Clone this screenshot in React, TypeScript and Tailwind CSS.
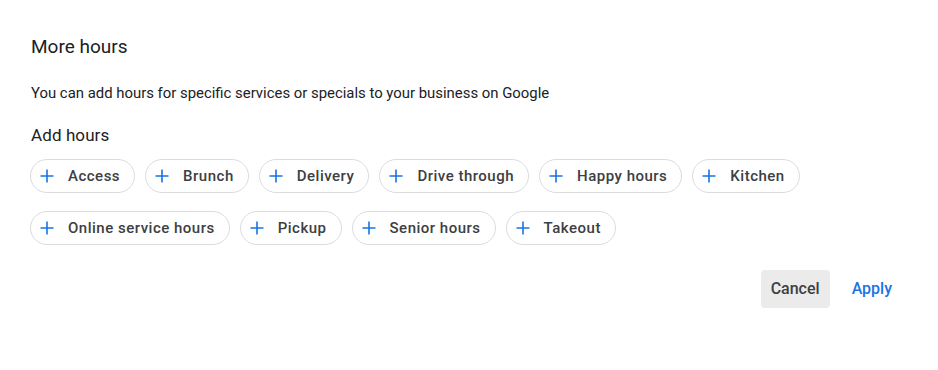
const chipRows = [
  ["Access", "Brunch", "Delivery", "Drive through", "Happy hours", "Kitchen"],
  ["Online service hours", "Pickup", "Senior hours", "Takeout"],
];

function PlusIcon() {
  return (
    <svg width="18" height="18" viewBox="0 0 18 18" aria-hidden="true">
      <path d="M9 2.5v13M2.5 9h13" stroke="#1a73e8" strokeWidth="1.6" fill="none" />
    </svg>
  );
}

function HoursChip({ label }: { label: string }) {
  return (
    <button className="flex h-[34px] items-center gap-3 rounded-full border border-[#dadce0] bg-white pl-[7px] pr-[14px] text-[15px] font-medium tracking-[0.5px] text-[#3c4043]">
      <PlusIcon />
      {label}
    </button>
  );
}

export default function App() {
  return (
    <div
      className="h-[370px] w-[938px] bg-white px-[30px] pt-[35px]"
      style={{ fontFamily: "Roboto, 'Liberation Sans', sans-serif" }}
    >
      <h2 className="pl-px text-[19px] leading-6 text-[#202124]">More hours</h2>

      <p className="mt-6 pl-px text-[14.9px] leading-5 text-[#202124]">
        You can add hours for specific services or specials to your business on Google
      </p>

      <p className="mt-[20px] pl-px text-[17px] leading-6 tracking-[0.1px] text-[#202124]">Add hours</p>

      <div className="mt-[12px] flex flex-col gap-[18px]">
        {chipRows.map((row, i) => (
          <div key={i} className="flex gap-[10px]">
            {row.map((label) => (
              <HoursChip key={label} label={label} />
            ))}
          </div>
        ))}
      </div>

      <div className="mt-[25px] flex justify-end gap-[6px]">
        <button className="h-[38px] rounded bg-[#ebebeb] px-[10px] text-[16px] font-medium text-[#3c4043]">
          Cancel
        </button>
        <button className="h-[38px] rounded px-4 text-[16px] font-medium text-[#1a73e8]">
          Apply
        </button>
      </div>
    </div>
  );
}
